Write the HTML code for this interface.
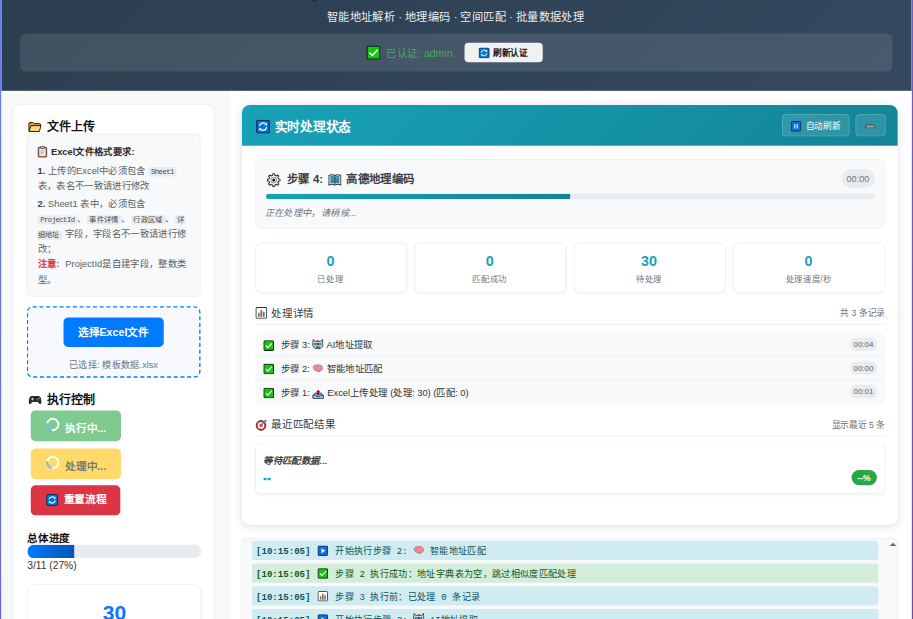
<!DOCTYPE html>
<html lang="zh-CN">
<head>
<meta charset="utf-8">
<title>智能地址解析</title>
<style>
*{box-sizing:border-box;margin:0;padding:0}
html,body{width:913px;height:619px;overflow:hidden}
body{font-family:"Liberation Sans",sans-serif;background:linear-gradient(135deg,#667eea 0%,#764ba2 100%);color:#333}
#clip{position:absolute;left:0;top:0;width:913px;height:619px;overflow:hidden}
#app{position:absolute;left:0;top:0;width:1366px;height:927px;transform:scale(0.6684);transform-origin:0 0;font-size:14px;line-height:22.4px}
.abs{position:absolute}
svg{display:block}
.ico{display:inline-block;vertical-align:middle;flex:none}
#container{left:1.500px;top:0;width:1362.500px;height:927px;background:#fff;overflow:hidden}
/* header */
#header{left:0;top:0;width:1362.500px;height:135.5px;background:linear-gradient(135deg,#2c3e50 0%,#34495e 100%);color:#fff}
#subtitle{left:-1px;top:11.500px;width:1362px;height:28px;line-height:28px;text-align:center;font-size:16.8px;color:rgba(255,255,255,.92)}
#authbar{left:28.500px;top:49.5px;width:1305px;height:57.5px;border-radius:8px;background:rgba(255,255,255,.1);display:flex;align-items:center;justify-content:center;padding-right:6px;padding-top:.5px}
#authbar .txt{color:#3fae54;font-size:15.700px;margin-left:8.500px;margin-right:19px;line-height:28px;font-weight:500;width:98px;white-space:nowrap;position:relative;top:2.500px}
#authbar .btn{width:117px;height:28.5px;border-radius:6px;background:#f1f1f1;color:#111;font-weight:bold;font-size:13px;display:flex;align-items:center;justify-content:center;line-height:28px;white-space:nowrap;padding-top:3px}
#authbar .btn svg{margin-right:5px;margin-top:-2px}
/* sidebar */
#sidebar{left:0;top:135.5px;width:341px;height:800px;background:#f8f9fa;border-right:1px solid #e9ecef}
#scard{left:17.700px;top:20px;width:302px;height:800px;background:#fff;border:1px solid #e9ecef;border-radius:12px;box-shadow:0 2px 6px rgba(0,0,0,.03)}
.h3{font-size:18px;font-weight:bold;color:#111;line-height:26px;height:26px;white-space:nowrap;display:flex;align-items:center}
.h3 svg{margin-right:7px}
#infobox{left:20px;top:43.500px;width:260px;height:243.500px;background:#f8f9fa;border:1px solid #e6e9ec;border-radius:8px;padding:15px 15px;font-size:14px;line-height:22.4px;color:#5a6268}
#infobox .t{font-weight:bold;color:#222;display:flex;align-items:center;height:22.4px;white-space:nowrap;position:relative;top:-.5px;color:#2b2b2b}
#infobox .t svg{margin-right:5px}
#infobox .ln{height:22.700px;white-space:nowrap}
#infobox code.cl{border-radius:3px 0 0 3px;padding-right:0}
#infobox code.cr{border-radius:0 3px 3px 0;padding-left:0}
#infobox b{color:#444}
#infobox code{font-family:"Liberation Mono",monospace;font-size:11px;background:#e9ecef;color:#495057;padding:1px 4px;border-radius:3px}
#infobox code.la{letter-spacing:-.9px}
#infobox .warn{color:#dc3545;font-weight:bold;margin-right:5px}
#upload{left:20px;top:301.700px;width:260px;height:106.500px;border:2.500px dashed #007bff;border-radius:9px;background:#f8f9ff}
#upload .btn{position:absolute;left:52.5px;top:15px;width:150px;height:44px;border-radius:7px;background:#007bff;color:#fff;font-weight:bold;font-size:16px;line-height:46px;text-align:center;white-space:nowrap}
#upload .sel{position:absolute;left:0;top:75.500px;width:255px;text-align:center;font-size:13.600px;line-height:20px;color:#6c757d;white-space:nowrap}
.cbtn{position:absolute;left:26px;width:135px;border-radius:7px;color:#fff;font-weight:bold;font-size:16px;display:flex;align-items:center;justify-content:center;white-space:nowrap}
.spin{width:20px;height:20px;border-radius:50%;border:3px solid rgba(255,255,255,.95);border-left-color:#7ab8f5;margin-right:9px;margin-top:-4px;flex:none;transform:rotate(-35deg)}
.bt{position:relative;top:5px}
#pbar{left:20.800px;top:658.900px;width:260px;height:20px;border-radius:10px;background:#e9ecef;overflow:hidden}
#pbar i{display:block;width:70px;height:20px;background:linear-gradient(90deg,#007bff,#0056b3)}
#scstat{left:20.500px;top:717.3px;width:260px;height:120px;border:1px solid #e9ecef;border-radius:12px;background:#fff;box-shadow:0 2px 4px rgba(0,0,0,.03)}
#scstat .n{position:absolute;left:.7px;top:22px;width:258px;text-align:center;font-size:31.5px;line-height:40px;font-weight:bold;color:#0a78fa}
/* main */
#main{left:341.500px;top:135.5px;width:1021px;height:800px;background:#fff}
#card{left:18.900px;top:21px;width:981.600px;height:628px;border-radius:12px;background:#fff;box-shadow:0 3px 14px rgba(0,0,0,.12);overflow:hidden}
#card>*{margin-left:-.9px}
#chead{left:0;top:0;width:982.5px;height:61.400px;background:linear-gradient(135deg,#17a2b8 0%,#138496 100%);color:#fff}
#chead .ttl{position:absolute;left:22px;top:20px;height:28px;font-size:19px;font-weight:bold;display:flex;align-items:center;white-space:nowrap}
#chead .ttl svg{margin-right:7px;margin-top:-2px}
.hbtn{position:absolute;top:14.5px;height:32.5px;padding-top:3px;border:1px solid rgba(255,255,255,.28);background:rgba(255,255,255,.12);border-radius:6px;color:#fff;font-size:13px;display:flex;align-items:center;justify-content:center;white-space:nowrap}
#cur{left:21px;top:81.5px;width:942px;height:104px;border:1px solid #e9ecef;border-radius:9px;background:#f8f9fa}
#cur .ttl{position:absolute;left:15.500px;top:16px;height:28px;font-size:17.1px;font-weight:bold;color:#3a4046;display:flex;align-items:center;white-space:nowrap}
#cur .tm{position:absolute;left:875.5px;top:14px;width:50px;height:27.5px;border-radius:14px;background:#e9ecef;color:#6c757d;font-size:13.5px;line-height:30.5px;text-align:center}
#cur .bar{position:absolute;left:14.5px;top:50.800px;width:911px;height:8px;border-radius:4px;background:#e9ecef;overflow:hidden}
#cur .bar i{display:block;width:455.5px;height:8px;background:linear-gradient(90deg,#17a2b8,#138496)}
#cur .msg{position:absolute;left:13px;top:70px;font-size:13.700px;line-height:20px;font-style:italic;color:#6c757d;white-space:nowrap}
.stat{position:absolute;top:206px;width:227px;height:75px;border:1px solid #e9ecef;border-radius:9px;background:#fff;box-shadow:0 1px 3px rgba(0,0,0,.04);text-align:center}
.stat .n{position:absolute;left:-1px;top:13px;width:225px;font-size:21.500px;line-height:28px;font-weight:bold;color:#17a2b8}
.stat .l{position:absolute;left:-1px;top:45px;width:225px;font-size:12.500px;line-height:18px;color:#6c757d;white-space:nowrap}
.sech{position:absolute;left:21px;width:942px;height:36px;border-bottom:1px solid #e9ecef}
.sech .l{position:absolute;left:0;top:7.5px;height:24px;font-size:15.700px;font-weight:normal;color:#343a40;display:flex;align-items:center;white-space:nowrap}
.sech .l svg{margin-right:6px;margin-top:-2px}
.sech .r{position:absolute;right:0;top:9px;font-size:13.100px;line-height:20px;color:#6c757d;white-space:nowrap}
#list{left:21px;top:341.800px;width:942px;height:106.300px;border-radius:9px;background:#f8f9fa;overflow:hidden}
.row{position:relative;height:35.450px;padding-top:2px;border-bottom:1px solid #e9ecef;display:flex;align-items:center;padding-left:12px;font-size:14px;font-weight:500;color:#333;white-space:nowrap}
.row:last-child{border-bottom:none}
.row svg{margin-right:10px}
.row svg.mid{margin:0 4.500px 0 3.500px}
.row .tm{position:absolute;right:12.5px;top:7.200px;width:39.500px;height:19.500px;border-radius:10px;background:#e9ecef;color:#5a6268;font-size:11.800px;font-weight:normal;line-height:20px;text-align:center}
#res{left:21px;top:507.5px;width:942px;height:74px;border:1px dashed #dfe3e7;border-radius:7px;background:#fff;box-shadow:0 2px 5px rgba(0,0,0,.06)}
#res .a{position:absolute;left:11px;top:13.5px;font-size:14.2px;line-height:20px;font-style:italic;font-weight:bold;color:#3d4246;white-space:nowrap}
#res .b{position:absolute;left:11px;top:39.500px;font-size:15px;letter-spacing:1px;text-shadow:0 .6px 0 #17a2b8,0 -.6px 0 #17a2b8;line-height:20px;color:#17a2b8;font-weight:bold}
#res .pc{position:absolute;left:891px;top:37.5px;width:37.5px;height:23px;border-radius:12px;background:#28a745;color:#fff;font-size:13px;font-weight:bold;line-height:23px;text-align:center}
#log{left:18px;top:669.5px;width:982.5px;height:200px;border:1px solid #e9ecef;border-radius:8px;background:#f8f9fa;overflow:hidden}
.lg{position:absolute;left:15px;width:937px;height:28.800px;margin-top:-.6px;border-radius:4px;font-family:"Liberation Mono",monospace;font-size:13.6px;line-height:28px;padding-left:6px;padding-top:5.700px;white-space:nowrap;display:flex;align-items:center}
.lg b{margin-right:10px}
.lg svg{margin-right:11px;margin-top:-4px}
.lg svg.mid{margin:-4px 8px 0 8px}
.info{background:#d1ecf1;color:#0c5460}
.ok{background:#d4edda;color:#155724}
#sbar{left:963.5px;top:0;width:17px;height:200px;background:#fafafa}
#sbar i{position:absolute;left:5px;top:5.500px;width:0;height:0;border-left:5px solid transparent;border-right:5px solid transparent;border-bottom:5.500px solid #666}
</style>
</head>
<body>
<div id="clip">
<div id="app">
<div id="container" class="abs">
  <div id="header" class="abs">
    <div class="abs" style="left:465px;top:0;width:8px;height:1.500px;background:#1e2a36;border-radius:0 0 2px 2px"></div>
    <div id="subtitle" class="abs">智能地址解析 · 地理编码 · 空间匹配 · 批量数据处理</div>
    <div id="authbar" class="abs">
      <svg class="ico" width="21.500" height="21.500" viewBox="0 0 20 20"><rect x="1" y="1" width="18" height="18" rx="2" fill="#16c60c" stroke="#14241a" stroke-width="1.900"/><path d="M5 10.5l3.4 3.4L15.2 6.6" fill="none" stroke="#fff" stroke-width="2.100" stroke-linecap="round" stroke-linejoin="round"/></svg>
      <span class="txt">已认证: admin</span>
      <div class="btn"><svg class="ico" width="16.500" height="16.500" viewBox="0 0 20 20"><rect x="1" y="1" width="18" height="18" rx="2" fill="#0078d7" stroke="#0a2a4d" stroke-width="1.6"/><path d="M4.900 9.300a5.200 5.200 0 0 1 9.200-2.600M15.100 10.700a5.200 5.200 0 0 1-9.200 2.600" fill="none" stroke="#fff" stroke-width="1.700"/><path d="M15.600 4.300v3.600h-3.600zM4.400 15.700v-3.600h3.600z" fill="#fff"/></svg>刷新认证</div>
    </div>
  </div>

  <div id="sidebar" class="abs">
    <div id="scard" class="abs">
      <div class="h3 abs" style="left:22px;top:20px"><svg class="ico" width="20.500" height="16" viewBox="0 0 22 17" style="margin-right:7px;margin-top:1px"><path d="M1.300 15.300V2.600c0-.8.500-1.300 1.300-1.300h5l1.900 1.900h9.300c.8 0 1.300.5 1.300 1.300v2" fill="#f2a91e" stroke="#1f1f1f" stroke-width="1.600" stroke-linejoin="round"/><path d="M1.500 1.500h3.500v2h-3.500z" fill="#d9342b"/><path d="M4.800 6.300h16l-2.700 9.400H1.400z" fill="#ffd972" stroke="#1f1f1f" stroke-width="1.600" stroke-linejoin="round"/></svg>文件上传</div>
      <div id="infobox" class="abs">
        <div class="t"><svg class="ico" width="15" height="18" viewBox="0 0 15 18"><rect x="1" y="2.500" width="13" height="14.500" rx="1.500" fill="#c48a55" stroke="#4a2f1a" stroke-width="1.400"/><rect x="3" y="4.500" width="9" height="10.800" fill="#f4f4f4"/><rect x="4.500" y=".8" width="6" height="3.400" rx="1" fill="#b9b9b9" stroke="#444" stroke-width="1.100"/><path d="M4.300 7.500h6.400M4.300 9.800h6.400M4.300 12.100h4.400" stroke="#9a9a9a" stroke-width="1.100"/></svg>Excel文件格式要求:</div>
        <div class="ln" style="margin-top:6px"><b>1.</b> 上传的Excel中必须包含 <code class="la">Sheet1</code></div>
        <div class="ln">表，表名不一致请进行修改</div>
        <div class="ln" style="margin-top:3.500px"><b>2.</b> Sheet1 表中，必须包含</div>
        <div class="ln"><code class="la">ProjectId</code>、<code>事件详情</code>、<code>行政区域</code>、<code class="cl">详</code></div>
        <div class="ln"><code class="cr">细地址</code> 字段，字段名不一致请进行修</div>
        <div class="ln">改；</div>
        <div class="ln"><span class="warn">注意:</span> ProjectId是自建字段，整数类</div>
        <div class="ln">型。</div>
      </div>
      <div id="upload" class="abs">
        <div class="btn">选择Excel文件</div>
        <div class="sel">已选择: 模板数据.xlsx</div>
      </div>
      <div class="h3 abs" style="left:21.500px;top:428.800px"><svg class="ico" width="21" height="15" viewBox="0 0 24 17" style="margin-right:8px"><path d="M6.500 1.500h11c3 0 4.400 2.300 5 6.500.5 3.600.6 7.500-1.800 7.500-2 0-3.200-3.500-5-3.500H8.300c-1.800 0-3 3.500-5 3.500C.9 15.500 1 11.600 1.500 8c.6-4.200 2-6.500 5-6.500z" fill="#2b2b2b"/><path d="M5.200 6.800h4.600M7.500 4.500v4.600" stroke="#ddd" stroke-width="1.500"/><circle cx="16" cy="8.200" r="1.100" fill="#ddd"/><circle cx="18.700" cy="5.600" r="1.100" fill="#ddd"/></svg>执行控制</div>
      <div class="cbtn" style="top:457px;height:46px;background:#7eca8f"><span class="spin"></span><span class="bt">执行中...</span></div>
      <div class="cbtn" style="top:514px;height:46px;background:#ffda6a;color:#7a7a70"><span class="spin"></span><span class="bt">处理中...</span></div>
      <div class="cbtn" style="top:569.700px;height:44.500px;width:134px;padding-left:2px;background:#dc3545"><svg class="ico" width="18" height="18" viewBox="0 0 20 20" style="margin-right:8px"><rect x="1" y="1" width="18" height="18" rx="2" fill="#0078d7" stroke="#0a2a4d" stroke-width="1.600"/><path d="M4.900 9.300a5.200 5.200 0 0 1 9.200-2.600M15.100 10.700a5.200 5.200 0 0 1-9.200 2.600" fill="none" stroke="#fff" stroke-width="1.700"/><path d="M15.600 4.300v3.600h-3.600zM4.400 15.700v-3.600h3.600z" fill="#fff"/></svg>重置流程</div>
      <div class="abs" style="left:20.700px;top:638.500px;font-size:15.800px;font-weight:bold;color:#111;line-height:22px;white-space:nowrap">总体进度</div>
      <div id="pbar" class="abs"><i></i></div>
      <div class="abs" style="left:20.700px;top:678.500px;font-size:15.3px;line-height:22px;color:#333;white-space:nowrap">3/11 (27%)</div>
      <div id="scstat" class="abs"><div class="n">30</div></div>
    </div>
  </div>

  <div id="main" class="abs">
    <div id="card" class="abs">
      <div id="chead" class="abs">
        <div class="ttl"><svg class="ico" width="21" height="21" viewBox="0 0 20 20"><rect x="1" y="1" width="18" height="18" rx="2" fill="#0078d7" stroke="#0a2a4d" stroke-width="1.600"/><path d="M4.900 9.300a5.200 5.200 0 0 1 9.200-2.600M15.100 10.700a5.200 5.200 0 0 1-9.200 2.600" fill="none" stroke="#fff" stroke-width="1.700"/><path d="M15.600 4.300v3.600h-3.600zM4.400 15.700v-3.600h3.600z" fill="#fff"/></svg>实时处理状态</div>
        <div class="hbtn" style="left:809px;width:100.500px"><svg class="ico" width="16" height="16" viewBox="0 0 20 20" style="margin-right:6px"><rect x="1" y="1" width="18" height="18" rx="2" fill="#0f6fe0" stroke="#0a2a4d" stroke-width="1.800"/><path d="M7.800 6v8M12.200 6v8" stroke="#fff" stroke-width="2"/></svg>自动刷新</div>
        <div class="hbtn" style="left:918.500px;width:45px"><svg class="ico" width="16" height="6.500" viewBox="0 0 14 6"><rect x=".7" y=".7" width="12.600" height="4.600" rx="1.500" fill="#9a9a9a" stroke="#3a3a3a" stroke-width="1.200"/></svg></div>
      </div>
      <div id="cur" class="abs">
        <div class="ttl"><svg class="ico" width="21" height="21" viewBox="0 0 20 20" style="margin-right:10px"><path d="M16.82 8.42 L19.12 8.78 L19.12 11.22 L16.82 11.58 L15.94 13.70 L17.31 15.58 L15.58 17.31 L13.70 15.94 L11.58 16.82 L11.22 19.12 L8.78 19.12 L8.42 16.82 L6.30 15.94 L4.42 17.31 L2.69 15.58 L4.06 13.70 L3.18 11.58 L0.88 11.22 L0.88 8.78 L3.18 8.42 L4.06 6.30 L2.69 4.42 L4.42 2.69 L6.30 4.06 L8.42 3.18 L8.78 0.88 L11.22 0.88 L11.58 3.18 L13.70 4.06 L15.58 2.69 L17.31 4.42 L15.94 6.30Z" fill="#fafafa" stroke="#2f2f2f" stroke-width="1.5" stroke-linejoin="round"/><circle cx="10" cy="10" r="4.2" fill="#e4e4e4" stroke="#8a8a8a" stroke-width="1.3"/><circle cx="10" cy="10" r="1.9" fill="#111"/></svg>步骤 4:&nbsp;<svg class="ico" width="20" height="19" viewBox="0 0 20 19" style="margin:0 7px 0 3px"><path d="M1 2.500c3-1.600 6-1.600 9 0 3-1.600 6-1.600 9 0v14.500c-3-1.600-6-1.600-9 0-3-1.600-6-1.600-9 0z" fill="#e8e8e8" stroke="#3a3a3a" stroke-width="1.500" stroke-linejoin="round"/><path d="M3.300 3.800c2.200-.9 4.400-.9 6.700.3 2.300-1.200 4.500-1.200 6.700-.3v10.600c-2.200-.9-4.400-.9-6.700.3-2.300-1.200-4.500-1.200-6.700-.3z" fill="#2b7fd6"/><path d="M4.500 5.500c1.500-1 3.500-.5 4 1s-1 2-1.500 3.500-2 .5-2.500-1zM11.500 5c1.500-1 3.500-.5 4 .8s-.5 2.200-1.500 2.400-1 2.500-2 2.300-1-2.500-.5-5.500z" fill="#3fae3f"/><path d="M10 3v14" stroke="#3a3a3a" stroke-width="1"/></svg>高德地理编码</div>
        <div class="tm">00:00</div>
        <div class="bar"><i></i></div>
        <div class="msg">正在处理中，请稍候...</div>
      </div>
      <div class="stat" style="left:21px"><div class="n">0</div><div class="l">已处理</div></div>
      <div class="stat" style="left:259.300px"><div class="n">0</div><div class="l">匹配成功</div></div>
      <div class="stat" style="left:497.600px"><div class="n">30</div><div class="l">待处理</div></div>
      <div class="stat" style="left:736px"><div class="n">0</div><div class="l">处理速度/秒</div></div>

      <div class="sech" style="top:293px"><div class="l"><svg class="ico" width="18" height="18" viewBox="0 0 18 18"><rect x="1" y="1" width="16" height="16" rx="1.500" fill="#fff" stroke="#333" stroke-width="1.500"/><rect x="4" y="9" width="2.600" height="6" fill="#2f9e57"/><rect x="7.700" y="5" width="2.600" height="10" fill="#e03c31"/><rect x="11.400" y="7.500" width="2.600" height="7.500" fill="#2d7fe0"/></svg>处理详情</div><div class="r">共 3 条记录</div></div>
      <div id="list" class="abs">
        <div class="row"><svg class="ico" width="16" height="16" viewBox="0 0 20 20"><rect x="1" y="1" width="18" height="18" rx="2" fill="#16c60c" stroke="#14241a" stroke-width="1.900"/><path d="M5 10.500l3.400 3.400L15.200 6.600" fill="none" stroke="#fff" stroke-width="2.100" stroke-linecap="round" stroke-linejoin="round"/></svg>步骤 3:<svg class="ico mid" width="17" height="16" viewBox="0 0 17 16" style="position:relative;top:-1.700px"><path d="M1.500 1l3.200 2.800h7.600L15.500 1l.7 6.500c.3 4.200-2.800 7.300-7.700 7.300S.5 11.700.8 7.500z" fill="#d3d6d9" stroke="#2b2b2b" stroke-width="1.300" stroke-linejoin="round"/><rect x="7" y="1.800" width="3" height="2.800" fill="#e23b2e"/><rect x="3.300" y="6" width="10.400" height="3.600" rx="1" fill="#14506b"/><rect x="4.300" y="6.800" width="3" height="2" fill="#4fc3e8"/><rect x="9.700" y="6.800" width="3" height="2" fill="#4fc3e8"/><rect x="5.500" y="11.300" width="6" height="1.800" rx=".6" fill="#3a3a3a"/></svg>AI地址提取<span class="tm">00:04</span></div>
        <div class="row"><svg class="ico" width="16" height="16" viewBox="0 0 20 20"><rect x="1" y="1" width="18" height="18" rx="2" fill="#16c60c" stroke="#14241a" stroke-width="1.900"/><path d="M5 10.500l3.400 3.400L15.200 6.600" fill="none" stroke="#fff" stroke-width="2.100" stroke-linecap="round" stroke-linejoin="round"/></svg>步骤 2:<svg class="ico mid" width="17" height="14" viewBox="0 0 17 15"><path d="M6 1.200c1-.8 2.600-.8 3.600-.1 1.600-.6 3.600 0 4.400 1.400 1.500.6 2.200 2.200 1.600 3.700.5 1.600-.4 3.200-2 3.600-.5 1-1.700 1.500-2.800 1.200l-.3 1.300-2-1.400c-1.300.4-2.700-.1-3.400-1.200C3.500 9.600 2.200 8.500 2.200 7 1 6 .9 4.200 2 3.100 2.500 1.700 4.300.8 6 1.200z" fill="#f3929f" stroke="#b2475b" stroke-width="1.100" stroke-linejoin="round"/><path d="M5 4.500c1.200-1.200 2.800-1 3.500.3M8.500 7.500c1.400.9 3 .3 3.700-1.200M5 8c.8-.9 2-.9 2.800-.2M10 3.200c1-.5 2.200-.2 2.800.7" stroke="#d1647a" stroke-width=".9" fill="none"/></svg>智能地址匹配<span class="tm">00:00</span></div>
        <div class="row"><svg class="ico" width="16" height="16" viewBox="0 0 20 20"><rect x="1" y="1" width="18" height="18" rx="2" fill="#16c60c" stroke="#14241a" stroke-width="1.900"/><path d="M5 10.500l3.400 3.400L15.200 6.600" fill="none" stroke="#fff" stroke-width="2.100" stroke-linecap="round" stroke-linejoin="round"/></svg>步骤 1:<svg class="ico mid" width="18" height="15" viewBox="0 0 18 15" style="position:relative;top:1.500px"><path d="M1.200 9.800l3-3.600h9.600l3 3.600v4H1.200z" fill="#5aa6e8" stroke="#1c2f45" stroke-width="1.200" stroke-linejoin="round"/><path d="M1.200 9.800h4.300l1 1.700h5l1-1.700h4.300v4H1.200z" fill="#cfe3f7" stroke="#1c2f45" stroke-width="1.100" stroke-linejoin="round"/><path d="M9 9V4" stroke="#8a1515" stroke-width="2.600"/><path d="M5.800 5L9 1.200 12.200 5z" fill="#8a1515"/></svg>Excel上传处理 (处理: 30) (匹配: 0)<span class="tm">00:01</span></div>
      </div>
      <div class="sech" style="top:460.500px"><div class="l"><svg class="ico" width="18" height="18" viewBox="0 0 18 18"><circle cx="8.500" cy="9.500" r="7.300" fill="#e03c31" stroke="#5a1a14" stroke-width="1.200"/><circle cx="8.500" cy="9.500" r="4.800" fill="#fff"/><circle cx="8.500" cy="9.500" r="2.500" fill="#e03c31"/><path d="M8.500 9.500L15.500 2" stroke="#2d7fe0" stroke-width="1.800"/><path d="M13 1.500l3.500 0 0 3.500z" fill="#2d7fe0"/></svg>最近匹配结果</div><div class="r">显示最近 5 条</div></div>
      <div id="res" class="abs"><div class="a">等待匹配数据...</div><div class="b">--</div><div class="pc">--%</div></div>
    </div>

    <div id="log" class="abs">
      <div class="lg info" style="top:3.500px"><b>[10:15:05]</b><svg class="ico" width="16" height="16" viewBox="0 0 20 20"><rect x="1" y="1" width="18" height="18" rx="2" fill="#0f6fe0" stroke="#0a2a4d" stroke-width="1.800"/><path d="M7.500 5.500l7 4.500-7 4.500z" fill="#fff"/></svg>开始执行步骤 2:<svg class="ico mid" width="17" height="14" viewBox="0 0 17 15"><path d="M6 1.200c1-.8 2.600-.8 3.600-.1 1.600-.6 3.600 0 4.400 1.400 1.500.6 2.200 2.200 1.600 3.700.5 1.600-.4 3.200-2 3.600-.5 1-1.700 1.500-2.800 1.200l-.3 1.300-2-1.400c-1.300.4-2.700-.1-3.400-1.200C3.500 9.600 2.200 8.500 2.200 7 1 6 .9 4.200 2 3.100 2.500 1.700 4.300.8 6 1.200z" fill="#f3929f" stroke="#b2475b" stroke-width="1.100" stroke-linejoin="round"/><path d="M5 4.500c1.200-1.200 2.800-1 3.500.3M8.500 7.500c1.400.9 3 .3 3.700-1.200M5 8c.8-.9 2-.9 2.800-.2M10 3.200c1-.5 2.200-.2 2.800.7" stroke="#d1647a" stroke-width=".9" fill="none"/></svg>智能地址匹配</div>
      <div class="lg ok" style="top:37.700px"><b>[10:15:05]</b><svg class="ico" width="16" height="16" viewBox="0 0 20 20"><rect x="1" y="1" width="18" height="18" rx="2" fill="#16c60c" stroke="#14241a" stroke-width="1.900"/><path d="M5 10.500l3.400 3.400L15.200 6.600" fill="none" stroke="#fff" stroke-width="2.100" stroke-linecap="round" stroke-linejoin="round"/></svg>步骤 2 执行成功：地址字典表为空，跳过相似度匹配处理</div>
      <div class="lg info" style="top:71.800px"><b>[10:15:05]</b><svg class="ico" width="16" height="16" viewBox="0 0 18 18"><rect x="1" y="1" width="16" height="16" rx="1.500" fill="#fff" stroke="#333" stroke-width="1.500"/><rect x="4" y="9" width="2.600" height="6" fill="#2f9e57"/><rect x="7.700" y="5" width="2.600" height="10" fill="#e03c31"/><rect x="11.400" y="7.500" width="2.600" height="7.500" fill="#2d7fe0"/></svg>步骤 3 执行前：已处理 0 条记录</div>
      <div class="lg info" style="top:105.900px"><b>[10:15:05]</b><svg class="ico" width="16" height="16" viewBox="0 0 20 20"><rect x="1" y="1" width="18" height="18" rx="2" fill="#0f6fe0" stroke="#0a2a4d" stroke-width="1.800"/><path d="M7.500 5.500l7 4.500-7 4.500z" fill="#fff"/></svg>开始执行步骤 3:<svg class="ico mid" width="17" height="16" viewBox="0 0 17 16" style="position:relative;top:-1.700px"><path d="M1.500 1l3.200 2.800h7.600L15.500 1l.7 6.500c.3 4.200-2.800 7.300-7.700 7.300S.5 11.700.8 7.500z" fill="#d3d6d9" stroke="#2b2b2b" stroke-width="1.300" stroke-linejoin="round"/><rect x="7" y="1.800" width="3" height="2.800" fill="#e23b2e"/><rect x="3.300" y="6" width="10.400" height="3.600" rx="1" fill="#14506b"/><rect x="4.300" y="6.800" width="3" height="2" fill="#4fc3e8"/><rect x="9.700" y="6.800" width="3" height="2" fill="#4fc3e8"/><rect x="5.500" y="11.300" width="6" height="1.800" rx=".6" fill="#3a3a3a"/></svg>AI地址提取</div>
      <div id="sbar" class="abs"><i></i></div>
    </div>
  </div>
</div>
</div>
</div>
</body>
</html>
